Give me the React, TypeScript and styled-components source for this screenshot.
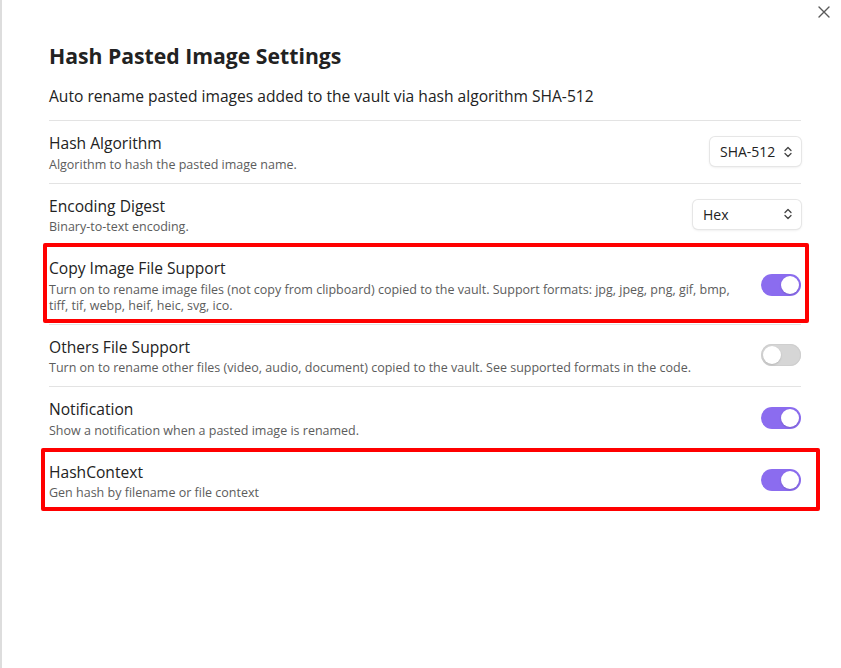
import React from "react";
import styled, { createGlobalStyle } from "styled-components";

const Global = createGlobalStyle`
  html, body { margin: 0; padding: 0; background: #ffffff; }
  body {
    font-family: "Open Sans", "Noto Sans", sans-serif;
    color: #222222;
    -webkit-font-smoothing: antialiased;
  }
`;

const Frame = styled.div`
  position: relative;
  box-sizing: border-box;
  min-height: 668px;
  border-left: 2px solid #dddddd;
  padding: 43px 40px 40px 47px;
`;

const CloseButton = styled.button`
  position: absolute;
  top: 5px;
  right: 10px;
  width: 14px;
  height: 14px;
  padding: 0;
  border: none;
  background: transparent;
  display: flex;
  align-items: center;
  justify-content: center;
  color: #5a5a5a;
`;

const Title = styled.h2`
  margin: 0;
  font-size: 21.2px;
  line-height: 26px;
  font-weight: 700;
  color: #222222;
`;

const Subtitle = styled.p`
  margin: 15px 0 12px;
  font-size: 15.6px;
  line-height: 24px;
  color: #222222;
`;

const Item = styled.div`
  position: relative;
  display: flex;
  align-items: center;
  padding: 13px 0 10px;
  border-top: 1px solid #e3e3e3;
`;

const Info = styled.div`
  flex: 1 1 auto;
  margin-right: 20px;
`;

const Name = styled.div`
  font-size: 15.6px;
  line-height: 19.5px;
  color: #222222;
`;

const Desc = styled.div`
  padding-top: 3px;
  font-size: 12.5px;
  line-height: 16px;
  color: #5c5c5c;
`;

const Control = styled.div`
  flex: 0 0 auto;
  display: flex;
  justify-content: flex-end;
  margin-top: -3px;
`;

const Dropdown = styled.div<{ $width: number }>`
  box-sizing: border-box;
  width: ${(p) => p.$width}px;
  height: 29px;
  padding: 0 9px 0 10px;
  display: flex;
  align-items: center;
  justify-content: space-between;
  border-radius: 5px;
  background: #ffffff;
  box-shadow: 0 0 0 1px #e6e6e6, 0 1px 3px rgba(0, 0, 0, 0.12);
  font-size: 14px;
  color: #222222;
`;

const Toggle = styled.div<{ $on: boolean }>`
  position: relative;
  box-sizing: border-box;
  width: 40px;
  height: 22px;
  border-radius: 11px;
  background: ${(p) => (p.$on ? "#8b6cef" : "#d6d6d6")};
  box-shadow: ${(p) => (p.$on ? "none" : "inset 0 0 0 1px #cfcfcf")};
`;

const Knob = styled.span<{ $on: boolean }>`
  position: absolute;
  top: 2px;
  left: ${(p) => (p.$on ? "20px" : "2px")};
  width: 18px;
  height: 18px;
  border-radius: 50%;
  background: #ffffff;
  box-shadow: 0 1px 2px rgba(0, 0, 0, 0.15);
`;

const Highlight = styled.div<{ $l: number; $t: number; $r: number; $b: number }>`
  position: absolute;
  left: ${(p) => p.$l}px;
  top: ${(p) => p.$t}px;
  right: ${(p) => p.$r}px;
  bottom: ${(p) => p.$b}px;
  border: 4px solid #ff0000;
  border-radius: 2px;
  pointer-events: none;
`;

const Chevrons = () => (
  <svg width="8" height="12" viewBox="0 0 8 12" fill="none" stroke="#444" strokeWidth="1.3" strokeLinecap="round" strokeLinejoin="round">
    <path d="M1 4.5 L4 1.5 L7 4.5" />
    <path d="M1 7.5 L4 10.5 L7 7.5" />
  </svg>
);

type Row = {
  name: string;
  desc: React.ReactNode;
  control: { kind: "select"; value: string; width: number } | { kind: "toggle"; on: boolean };
  mark?: [number, number, number, number];
};

const rows: Row[] = [
  {
    name: "Hash Algorithm",
    desc: "Algorithm to hash the pasted image name.",
    control: { kind: "select", value: "SHA-512", width: 91 },
  },
  {
    name: "Encoding Digest",
    desc: "Binary-to-text encoding.",
    control: { kind: "select", value: "Hex", width: 108 },
  },
  {
    name: "Copy Image File Support",
    desc: (
      <>
        Turn on to rename image files (not copy from clipboard) copied to the vault. Support formats: jpg, jpeg, png, gif, bmp,
        <br />
        tiff, tif, webp, heif, heic, svg, ico.
      </>
    ),
    control: { kind: "toggle", on: true },
    mark: [-6, -3, -8, 1],
  },
  {
    name: "Others File Support",
    desc: "Turn on to rename other files (video, audio, document) copied to the vault. See supported formats in the code.",
    control: { kind: "toggle", on: false },
  },
  {
    name: "Notification",
    desc: "Show a notification when a pasted image is renamed.",
    control: { kind: "toggle", on: true },
  },
  {
    name: "HashContext",
    desc: "Gen hash by filename or file context",
    control: { kind: "toggle", on: true },
    mark: [-8, -2, -19, 0],
  },
];

export default function App() {
  return (
    <>
      <Global />
      <Frame>
        <CloseButton aria-label="Close">
          <svg width="12" height="12" viewBox="0 0 12 12" stroke="currentColor" strokeWidth="1.4" strokeLinecap="round">
            <path d="M1 1 L11 11 M11 1 L1 11" />
          </svg>
        </CloseButton>
        <Title>Hash Pasted Image Settings</Title>
        <Subtitle>Auto rename pasted images added to the vault via hash algorithm SHA-512</Subtitle>
        {rows.map((r) => (
          <Item key={r.name}>
            <Info>
              <Name>{r.name}</Name>
              <Desc>{r.desc}</Desc>
            </Info>
            <Control>
              {r.control.kind === "select" ? (
                <Dropdown $width={r.control.width}>
                  <span>{r.control.value}</span>
                  <Chevrons />
                </Dropdown>
              ) : (
                <Toggle $on={r.control.on}>
                  <Knob $on={r.control.on} />
                </Toggle>
              )}
            </Control>
            {r.mark && <Highlight $l={r.mark[0]} $t={r.mark[1]} $r={r.mark[2]} $b={r.mark[3]} />}
          </Item>
        ))}
      </Frame>
    </>
  );
}
